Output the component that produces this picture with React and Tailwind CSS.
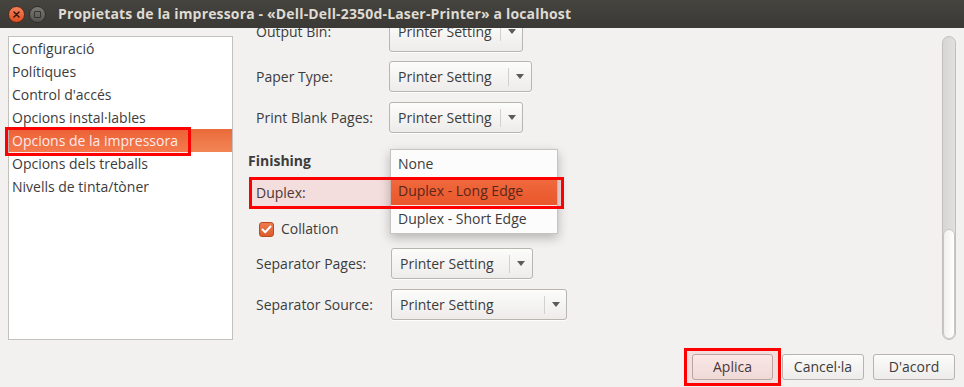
import React from "react";

function Arrow() {
  return (
    <svg width="8" height="5" viewBox="0 0 8 5" className="block">
      <path d="M0 0 L8 0 L4 5 Z" fill="#5c5b57" />
    </svg>
  );
}

function Combo({ w, sepAt, shifted }) {
  return (
    <div
      className={
        "h-[31px] rounded-[3px] border border-[#b9b6b0] bg-gradient-to-b from-[#fcfcfb] to-[#edecea] flex items-center shadow-[0_1px_0_rgba(255,255,255,0.8)] " +
        (shifted ? "pb-[10px]" : "")
      }
      style={{ width: w }}
    >
      <span className="pl-[8px] whitespace-nowrap text-[#3c3c3c]" style={{ width: sepAt }}>
        Printer Setting
      </span>
      <div className="h-[18px] w-px bg-[#d3d1cd]" />
      <div className="flex-1 flex justify-center">
        <Arrow />
      </div>
    </div>
  );
}

function Row({ label, labelW, w, sepAt, className = "", shifted = false, hidden = false }) {
  return (
    <div className={"flex items-center pl-[23px] " + className}>
      <div
        className={"h-[31px] flex items-center text-[#3c3c3c] whitespace-nowrap " + (shifted ? "pb-[10px]" : "")}
        style={{ width: labelW }}
      >
        {label}
      </div>
      {hidden ? <div className="h-[31px]" style={{ width: w }} /> : <Combo w={w} sepAt={sepAt} shifted={shifted} />}
    </div>
  );
}

function Btn({ children, w }) {
  return (
    <div
      className="h-[26px] rounded-[3px] border border-[#b7b4af] bg-gradient-to-b from-[#fbfbfa] to-[#edecea] flex items-center justify-center text-[#3c3c3c]"
      style={{ width: w }}
    >
      {children}
    </div>
  );
}

export default function App() {
  const items = [
    "Configuració",
    "Polítiques",
    "Control d'accés",
    "Opcions instal·lables",
    "Opcions de la impressora",
    "Opcions dels treballs",
    "Nivells de tinta/tòner",
  ];
  return (
    <div className="relative w-[964px] h-[387px] bg-[#f2f1f0] flex flex-col overflow-hidden font-['Open_Sans',sans-serif] text-[14px] leading-[20px]">
      {/* Title bar */}
      <div className="relative z-10 h-[28px] shrink-0 bg-gradient-to-b from-[#45443f] to-[#3a3935] flex items-center">
        <div className="ml-[8px] w-[17px] h-[17px] rounded-full bg-gradient-to-b from-[#f4825a] to-[#e04d1f] border border-[#5a2a1a] flex items-center justify-center">
          <svg width="7" height="7" viewBox="0 0 7 7">
            <path d="M1 1 L6 6 M6 1 L1 6" stroke="#3a1a10" strokeWidth="1.6" strokeLinecap="round" />
          </svg>
        </div>
        <div className="ml-[4px] w-[17px] h-[17px] rounded-full bg-gradient-to-b from-[#7a7873] to-[#55544f] border border-[#2e2d2a] flex items-center justify-center">
          <div className="w-[7px] h-[7px] rounded-[1px] border-[1.5px] border-[#35342f]" />
        </div>
        <div className="ml-[12px] font-bold text-[#dfdbd2] whitespace-nowrap tracking-[0.16px]">
          Propietats de la impressora - «Dell-Dell-2350d-Laser-Printer» a localhost
        </div>
      </div>

      {/* Body */}
      <div className="flex h-[312px] shrink-0">
        {/* Sidebar list */}
        <div className="ml-[8px] mt-[8px] w-[225px] h-[304px] bg-white border border-[#c4c1bc] flex flex-col">
          {items.map((t, i) =>
            i === 4 ? (
              <div
                key={t}
                className="h-[23px] flex items-center pl-[3px] text-white bg-gradient-to-b from-[#ea6a3a] to-[#f38555]"
              >
                {t}
              </div>
            ) : (
              <div key={t} className="h-[23px] flex items-center pl-[3px] text-[#3c3c3c]">
                {t}
              </div>
            )
          )}
        </div>

        {/* Scrolled content */}
        <div className="relative flex-1 overflow-hidden">
          <div className="flex flex-col mt-[-7px]">
            <Row label="Output Bin:" labelW={133} w={134} sepAt={110} shifted />
            <Row label="Paper Type:" labelW={133} w={143} sepAt={118} className="mt-[9px]" />
            <Row label="Print Blank Pages:" labelW={133} w={134} sepAt={110} className="mt-[10px]" />
            <div className="pl-[15px] mt-[18px] font-bold text-[#3c3c3c]">Finishing</div>
            <Row label="Duplex:" labelW={133} w={167} sepAt={140} className="mt-[6px]" hidden />
            <div className="flex items-center pl-[26px] mt-[11px] h-[20px]">
              <div className="w-[15px] h-[15px] rounded-[3px] bg-gradient-to-b from-[#ee7a4c] to-[#dc5c2c] border border-[#b84a22] flex items-center justify-center">
                <svg width="11" height="9" viewBox="0 0 11 9">
                  <path d="M1.5 4.5 L4.2 7.2 L9.5 1.5" fill="none" stroke="#fff" strokeWidth="2" strokeLinecap="round" strokeLinejoin="round" />
                </svg>
              </div>
              <span className="ml-[7px] text-[#3c3c3c]">Collation</span>
            </div>
            <Row label="Separator Pages:" labelW={135} w={142} sepAt={117} className="mt-[9px]" />
            <Row label="Separator Source:" labelW={135} w={176} sepAt={152} className="mt-[10px]" />
          </div>

          {/* Scrollbar */}
          <div className="absolute left-[709px] top-[8px] w-[14px] h-[304px] rounded-full border border-[#c3c0bb] bg-gradient-to-r from-[#d8d6d2] to-[#e2e0dc] overflow-hidden flex flex-col justify-end">
            <div className="h-[110px] rounded-full border border-[#c9c6c1] bg-gradient-to-r from-[#f0efed] to-[#ffffff]" />
          </div>

          {/* Popup menu */}
          <div className="absolute left-[157px] top-[121px] w-[168px] bg-[#fcfcfc] border border-[#c7c4bf] shadow-[0_4px_10px_rgba(0,0,0,0.25)] flex flex-col">
            <div className="h-[27px] flex items-center pl-[7px] text-[#3c3c3c]">None</div>
            <div className="h-[28px] flex items-center pl-[7px] text-[#4b2a1e] bg-gradient-to-b from-[#ef7444] to-[#e85e2e]">
              Duplex - Long Edge
            </div>
            <div className="h-[28px] flex items-center pl-[7px] text-[#3c3c3c]">Duplex - Short Edge</div>
          </div>
        </div>
      </div>

      {/* Button bar */}
      <div className="flex justify-end gap-[9px] pr-[9px] pt-[14px]">
        <Btn w={81}>Aplica</Btn>
        <Btn w={82}>Cancel·la</Btn>
        <Btn w={82}>D'acord</Btn>
      </div>

      {/* Red annotation boxes */}
      <div className="absolute left-[5px] top-[127px] w-[186px] h-[29px] border-[3px] border-[#ff0000] bg-[#ff000014]" />
      <div className="absolute left-[249px] top-[177px] w-[315px] h-[32px] border-[3px] border-[#ff0000] bg-[#ff000014]" />
      <div className="absolute left-[684px] top-[348px] w-[97px] h-[38px] border-[3px] border-[#ff0000] bg-[#ff000014]" />
    </div>
  );
}
